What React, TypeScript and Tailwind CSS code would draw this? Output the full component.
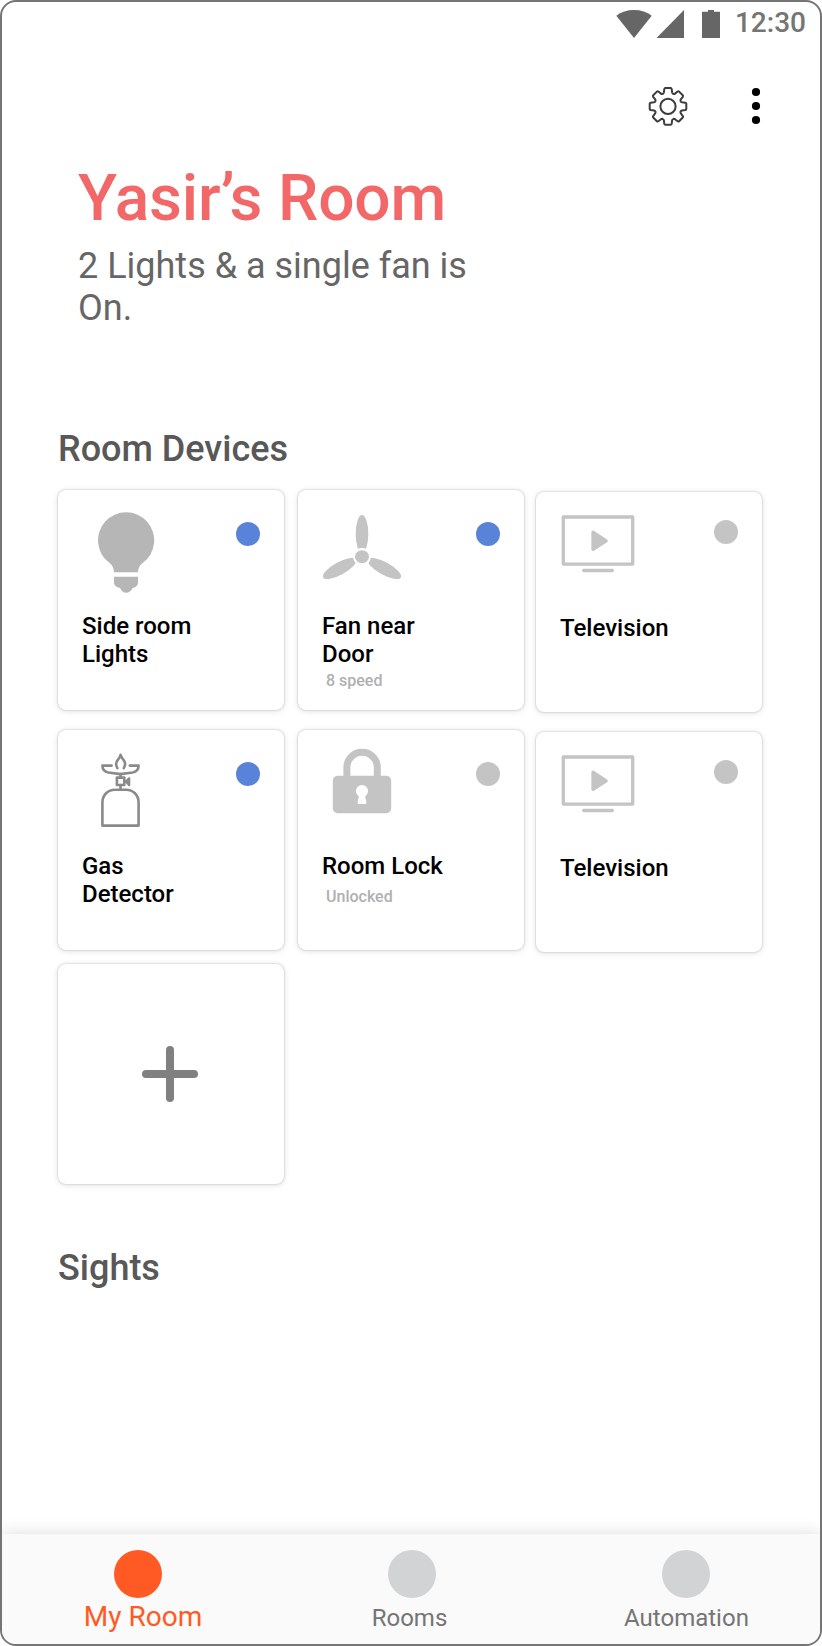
import type { ReactNode } from "react";

function gearPath(cx: number, cy: number): string {
  const parts: string[] = [];
  for (let i = 0; i < 8; i++) {
    const a = (i * Math.PI) / 4;
    const p = (x: number, y: number) => {
      const px = cx + x * Math.cos(a) - y * Math.sin(a);
      const py = cy + x * Math.sin(a) + y * Math.cos(a);
      return px.toFixed(2) + " " + py.toFixed(2);
    };
    parts.push((i === 0 ? "M" : "L") + p(-5.1, -12.7));
    parts.push("Q" + p(-4.3, -13) + " " + p(-4.1, -14));
    parts.push("L" + p(-3.7, -17.3));
    parts.push("Q" + p(-3.5, -18.3) + " " + p(-2.6, -18.3));
    parts.push("L" + p(2.6, -18.3));
    parts.push("Q" + p(3.5, -18.3) + " " + p(3.7, -17.3));
    parts.push("L" + p(4.1, -14));
    parts.push("Q" + p(4.3, -13) + " " + p(5.1, -12.7));
  }
  return parts.join("") + "Z";
}

function BulbIcon() {
  return (
    <g fill="#b6b6b6">
      <path d="M56 82.3c0-4-1.6-6.9-4.4-9.2A28.1 28.1 0 1 1 84.6 73.1c-2.8 2.3-4.6 5.2-4.6 9.2z" />
      <path d="M56 86.7h24v5.8c0 3-2 4.6-5.3 5.4-1.5 2.7-3.7 4.8-6.5 4.8s-4.8-2.1-6.2-4.8C58.2 97.1 56 95.5 56 92.5z" />
    </g>
  );
}

function FanIcon() {
  return (
    <g fill="#c4c4c4">
      <ellipse cx="64" cy="44" rx="6.3" ry="19" />
      <ellipse cx="41.6" cy="78.5" rx="18.8" ry="6.3" transform="rotate(-29 41.6 78.5)" />
      <ellipse cx="86.4" cy="78.5" rx="18.8" ry="6.3" transform="rotate(29 86.4 78.5)" />
      <circle cx="64" cy="66.7" r="9" fill="#fff" />
      <ellipse cx="64" cy="66.7" rx="7" ry="6.5" />
    </g>
  );
}

function TvIcon() {
  return (
    <g fill="none" stroke="#c4c4c4" strokeWidth="3.3" strokeLinejoin="round" strokeLinecap="round">
      <rect x="27.3" y="25" width="69.4" height="47.1" />
      <path d="M47.7 78.5h28.6" />
      <path d="M57 40.2v17.2L70.2 48.8z" fill="#c4c4c4" />
    </g>
  );
}

function GasIcon() {
  return (
    <g fill="none" stroke="#8a8a8a" strokeWidth="2.6" strokeLinejoin="round" strokeLinecap="round">
      <path d="M44.4 95.6V72.5C44.4 65 50 59.7 57 59.7h11C75 59.7 80.6 65 80.6 72.5v23.1z" />
      <rect x="58.9" y="47.6" width="7.4" height="7.4" />
      <path d="M62.5 44v3.6M62.5 55v4.5" />
      <path d="M67 51.6h2.5M71.2 48.2v7L67.8 51.6z" strokeWidth="2.2" />
      <path d="M53.6 35.6H44.4c0 4.4 2.4 6.3 6 6.9l12 1.6 12.2-1.6c3.6-.6 6-2.5 6-6.9h-8.8" />
      <path d="M59.4 38.2c-1.9-3.2-1.4-6.3.6-8.6 1.3-1.5 2.2-3 2.6-4.8.5 1.8 1.4 3.3 2.7 4.8 2 2.3 2.4 5.4.5 8.6" />
    </g>
  );
}

function LockIcon() {
  return (
    <g>
      <path d="M48.9 48V37.4a15.2 15.2 0 0 1 30.4 0V48" fill="none" stroke="#c4c4c4" strokeWidth="7" />
      <rect x="34.8" y="45.7" width="58.4" height="37.6" rx="5" fill="#c4c4c4" />
      <circle cx="64" cy="61" r="6.1" fill="#fff" />
      <path d="M61 64h6c0 4 1.4 6 1.4 8.5q0 1.5-1.5 1.5h-5.8q-1.5 0-1.5-1.5C59.6 70 61 68 61 64z" fill="#fff" />
    </g>
  );
}

function Card({ children }: { children?: ReactNode }) {
  return (
    <div className="h-[220px] w-[226px] rounded-lg bg-white shadow-[0_0_2px_rgba(0,0,0,0.26),0_1px_6px_rgba(0,0,0,0.13)]">
      {children}
    </div>
  );
}

type DeviceProps = {
  icon: ReactNode;
  name: string;
  note?: string;
  noteGap?: string;
  dotGap?: string;
  on?: boolean;
};

function Device({ icon, name, note, noteGap = "", dotGap = "mt-8", on = false }: DeviceProps) {
  return (
    <Card>
      <div className="flex h-[122px] items-start">
        <svg width="178" height="122" viewBox="0 0 178 122">
          {icon}
        </svg>
        <span className={`size-6 rounded-full ${dotGap} ${on ? "bg-[#5883d9]" : "bg-[#c4c4c4]"}`} />
      </div>
      <div className="pl-6">
        <div className="w-[130px] text-[24px] leading-[28px] font-medium text-black">{name}</div>
        {note && (
          <div className={`pl-1 text-[16px] leading-[19px] font-medium text-[#b0b0b0] ${noteGap}`}>{note}</div>
        )}
      </div>
    </Card>
  );
}

export default function App() {
  return (
    <div className="flex h-[1646px] w-[822px] flex-col overflow-hidden rounded-2xl border-2 border-[#757575] bg-white font-[Roboto,sans-serif]">
      <div className="flex h-[66px] items-start justify-end pt-1 pr-[14px]">
        <svg width="106" height="34" viewBox="616 6 106 34" fill="#666">
          <path d="M616.3 15.8C621 11.9 627.2 10 634 10s13 1.9 17.7 5.8L634 38z" />
          <path d="M656.5 38H684V10z" />
          <path d="M702 38V11.7h6V10h6v1.7h6V38z" />
        </svg>
        <span className="ml-[12.5px] text-[28px] leading-[33px] font-medium text-[#757575]">12:30</span>
      </div>

      <div className="flex h-[93px] justify-end pr-12">
        <svg width="128" height="76" viewBox="644 68 128 76">
          <path d={gearPath(668, 106.4)} fill="none" stroke="#3c3c3c" strokeWidth="2" strokeLinejoin="round" />
          <circle cx="668" cy="106.4" r="7.6" fill="none" stroke="#3c3c3c" strokeWidth="2" />
          <circle cx="756" cy="92" r="4.1" />
          <circle cx="756" cy="106" r="4.1" />
          <circle cx="756" cy="120" r="4.1" />
        </svg>
      </div>

      <header className="pl-[76px]">
        <h1 className="text-[64px] leading-[75px] font-medium tracking-[-0.19px] text-[#f26868]">Yasir’s Room</h1>
        <p className="mt-[9px] w-[400px] text-[36px] leading-[42px] text-[#666]">2 Lights &amp; a single fan is On.</p>
      </header>

      <main className="mt-[99px] flex-1 pl-14">
        <h2 className="text-[36px] leading-[42px] font-medium text-[#585858]">Room Devices</h2>
        <div className="mt-5 flex">
          <div className="flex flex-col gap-5">
            <Device icon={<BulbIcon />} name="Side room Lights" on />
            <Device icon={<GasIcon />} name="Gas Detector" on />
            <div className="-mt-1.5">
              <Card>
                <div className="flex h-full items-center justify-center pr-0.5">
                  <svg width="56" height="56" viewBox="0 0 56 56" stroke="#808080" strokeWidth="8" strokeLinecap="round">
                    <path d="M28 4v48M4 28h48" />
                  </svg>
                </div>
              </Card>
            </div>
          </div>
          <div className="ml-3.5 flex flex-col gap-5">
            <Device icon={<FanIcon />} name="Fan near Door" note="8 speed" noteGap="mt-[3px]" on />
            <Device icon={<LockIcon />} name="Room Lock" note="Unlocked" noteGap="mt-[7px]" />
          </div>
          <div className="ml-3 flex flex-col gap-5 pt-0.5">
            <Device icon={<TvIcon />} name="Television" dotGap="mt-7" />
            <Device icon={<TvIcon />} name="Television" dotGap="mt-7" />
          </div>
        </div>
        <h2 className="mt-[63px] text-[36px] leading-[42px] font-medium text-[#585858]">Sights</h2>
      </main>

      <nav className="grid h-[110px] grid-cols-[272px_276px_272px] bg-[#fafafa] pt-4 text-[24px] leading-[28px] text-[#757575] shadow-[0_0_16px_rgba(0,0,0,0.14)]">
        <div className="flex flex-col items-center">
          <span className="size-12 rounded-full bg-[#ff5a24]" />
          <span className="mt-0.5 pl-[10px] text-[28px] leading-[33px] text-[#ff5a24]">My Room</span>
        </div>
        <div className="flex flex-col items-center">
          <span className="size-12 rounded-full bg-[#d1d3d4]" />
          <span className="mt-1.5 pr-[5px]">Rooms</span>
        </div>
        <div className="flex flex-col items-center">
          <span className="size-12 rounded-full bg-[#d1d3d4]" />
          <span className="mt-1.5 pl-px">Automation</span>
        </div>
      </nav>
    </div>
  );
}
